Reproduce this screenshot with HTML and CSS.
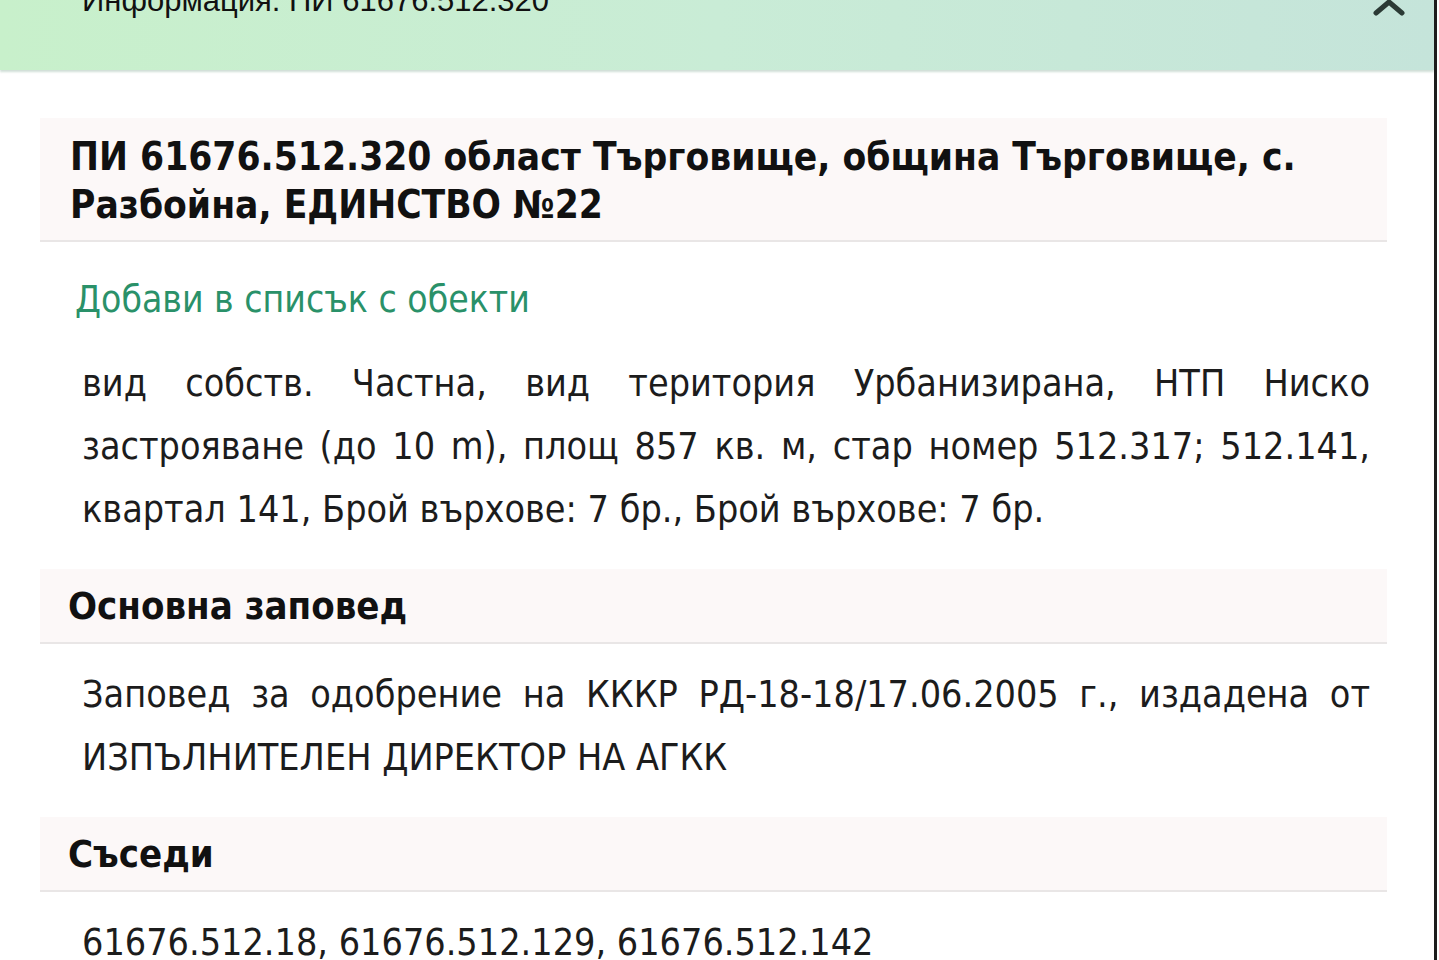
FILE: index.html
```html
<!DOCTYPE html>
<html lang="bg">
<head>
    <meta charset="UTF-8">
    <meta name="viewport" content="width=device-width, initial-scale=1.0">
    <title>Информация: ПИ 61676.512.320</title>
    <link rel="stylesheet" href="styles.css">
</head>
<body>
    <div class="popup">
        <div class="popup-header">
            <span class="popup-title">Информация: ПИ 61676.512.320</span>
            <button class="collapse-btn" title="Скрий">
                <svg width="34" height="18" viewBox="0 0 34 18">
                    <polyline points="4,13 17,2 30,13" fill="none" stroke="#2b3a35" stroke-width="5" stroke-linecap="round" stroke-linejoin="round"/>
                </svg>
            </button>
        </div>

        <div class="popup-body">
            <div class="section-head main-head">
                ПИ 61676.512.320 област Търговище, община Търговище, с. Разбойна, ЕДИНСТВО №22
            </div>

            <a href="#" class="add-link">Добави в списък с обекти</a>

            <p class="section-text">
                вид собств. Частна, вид територия Урбанизирана, НТП Ниско застрояване (до 10 m), площ 857 кв. м, стар номер 512.317; 512.141, квартал 141, Брой върхове: 7 бр., Брой върхове: 7 бр.
            </p>

            <div class="section-head">Основна заповед</div>
            <p class="section-text">
                Заповед за одобрение на КККР РД-18-18/17.06.2005 г., издадена от ИЗПЪЛНИТЕЛЕН ДИРЕКТОР НА АГКК
            </p>

            <div class="section-head">Съседи</div>
            <p class="section-text">
                61676.512.18, 61676.512.129, 61676.512.142
            </p>
        </div>
    </div>
</body>
</html>
```

FILE: styles.css
```css
body {
    margin: 0;
    background-color: #fff;
    font-family: "DejaVu Sans Condensed", "DejaVu Sans", sans-serif;
    color: #1c1c1c;
    overflow: hidden;
}

.popup {
    width: 1434px;
    height: 960px;
    border-right: 3px solid #1d1d1d;
    background-color: #fff;
    overflow: hidden;
}

.popup-header {
    display: flex;
    justify-content: space-between;
    align-items: flex-start;
    height: 70px;
    padding: 0 30px 0 82px;
    background: linear-gradient(to right, #c8f0cb, #c9ecd6 50%, #c5e4da);
    box-shadow: 0 2px 2px rgba(120, 160, 140, 0.35);
    overflow: hidden;
}

.popup-title {
    font-family: "Liberation Sans", Arial, sans-serif;
    font-size: 31px;
    line-height: 32px;
    margin-top: -15px;
    color: #111;
}

.collapse-btn {
    border: none;
    background: none;
    padding: 0;
    margin: 0 -2px 0 0;
    cursor: pointer;
}

.popup-body {
    padding: 48px 47px 0 40px;
}

.section-head {
    background-color: #fcf8f8;
    border-bottom: 2px solid #e9e6e6;
    padding: 13px 20px 12px 28px;
    font-weight: bold;
    font-size: 38px;
    line-height: 48px;
    color: #111;
}

.main-head {
    padding: 15px 40px 11px 30px;
    font-size: 38.5px;
}

.add-link {
    display: block;
    margin: 26px 0 2px 35px;
    color: #2a9169;
    text-decoration: none;
    font-size: 37px;
    line-height: 63px;
}

.section-text {
    margin: 0;
    padding: 19px 17px 28px 42px;
    font-size: 37.4px;
    line-height: 63px;
    text-align: justify;
}
```
